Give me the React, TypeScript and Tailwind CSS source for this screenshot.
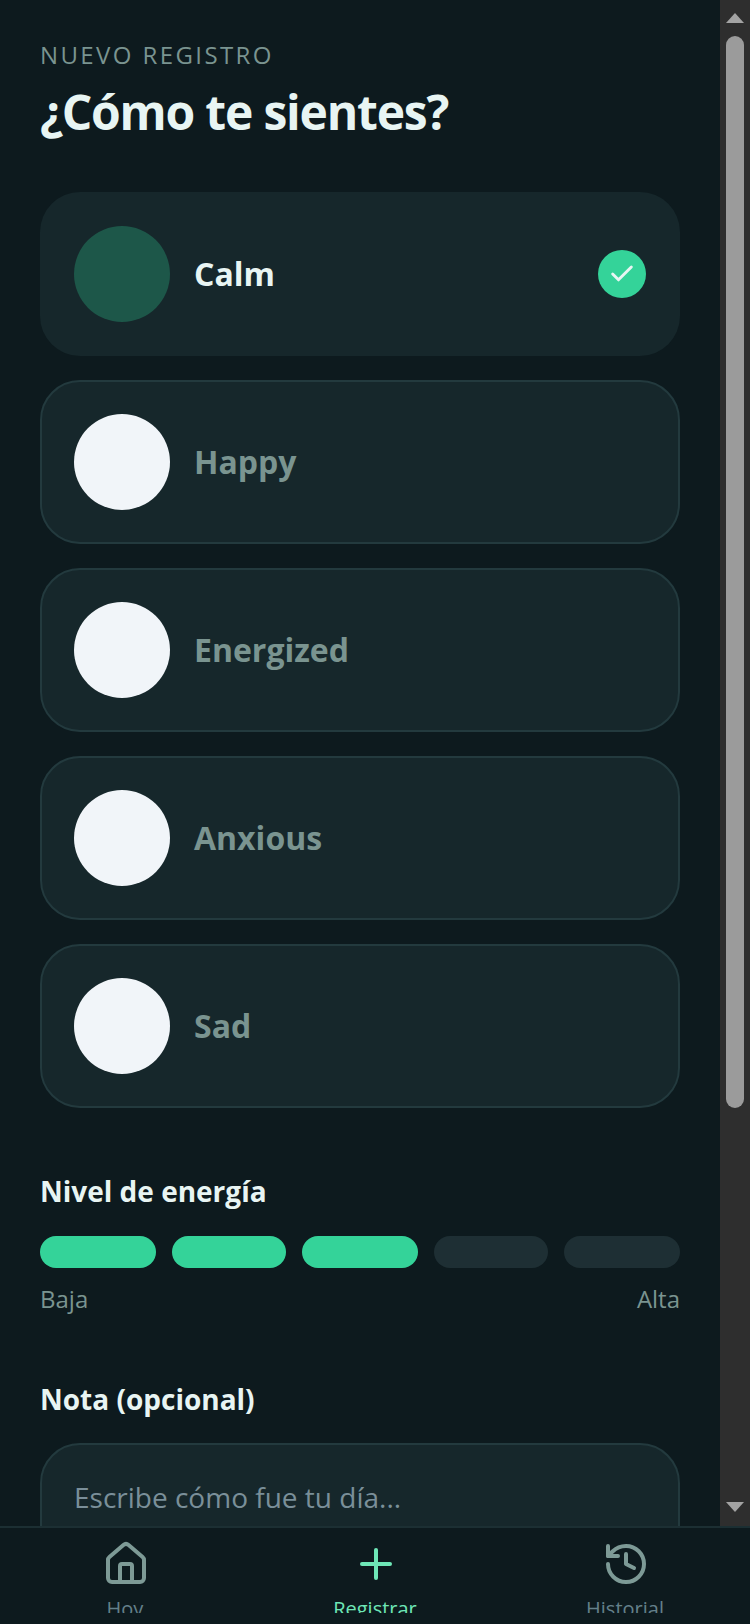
import { Check, History, House, Plus } from "lucide-react";

const moods = ["Calm", "Happy", "Energized", "Anxious", "Sad"];
const levels = [
  { on: true, width: "w-[116px]" },
  { on: true, width: "w-[114px]" },
  { on: true, width: "w-[116px]" },
  { on: false, width: "w-[114px]" },
  { on: false, width: "w-[116px]" },
];

function MoodCard({ name, selected }: { name: string; selected: boolean }) {
  return (
    <div
      className={`flex items-center gap-6 h-[164px] px-[32px] rounded-[40px] border-2 bg-[#16272b] ${
        selected ? "border-transparent" : "border-[#233a3e]"
      }`}
    >
      <div className={`w-24 h-24 rounded-full shrink-0 ${selected ? "bg-[#1d5749]" : "bg-[#f1f5f9]"}`} />
      <span className={`flex-1 text-[32px] font-bold ${selected ? "text-[#e8f5f3]" : "text-[#7a9490]"}`}>{name}</span>
      {selected && (
        <div className="w-12 h-12 rounded-full bg-[#34d399] flex items-center justify-center">
          <Check size={28} strokeWidth={2.5} className="text-[#e8f5f3]" />
        </div>
      )}
    </div>
  );
}

function Scrollbar() {
  return (
    <div className="w-[30px] shrink-0 bg-[#2e2e2e] flex flex-col items-center">
      <svg width="18" height="10" viewBox="0 0 18 10" className="mt-[13px] shrink-0">
        <polygon points="9,0 18,10 0,10" fill="#a3a3a3" />
      </svg>
      <div className="w-[18px] h-[1072px] mt-[13px] rounded-[9px] bg-[#9b9b9b] shrink-0" />
      <svg width="18" height="10" viewBox="0 0 18 10" className="mt-auto mb-[14px] shrink-0">
        <polygon points="0,0 18,0 9,10" fill="#a3a3a3" />
      </svg>
    </div>
  );
}

function TabItem({ label, active, children }: { label: string; active?: boolean; children: React.ReactNode }) {
  return (
    <div className={`flex-1 flex flex-col items-center ${active ? "text-[#6ee7b7]" : "text-[#7d9a96]"}`}>
      <div className="shrink-0 translate-x-px">{children}</div>
      <span className={`shrink-0 text-[20px] leading-[28px] mt-[7px] ${active ? "text-[#6ee7b7]" : "text-[#64808a]"}`}>{label}</span>
    </div>
  );
}

export default function App() {
  return (
    <div className="w-[750px] h-[1624px] flex flex-col overflow-hidden bg-[#0d1a1e] font-['Open_Sans',sans-serif]">
      <div className="flex-1 flex min-h-0 overflow-hidden">
        <div className="flex-1 min-w-0 px-10 pt-[39px]">
          <p className="text-[24px] leading-[32px] tracking-[2.4px] text-[#7a9490]">NUEVO REGISTRO</p>
          <h1 className="mt-[9px] text-[48px] leading-[64px] font-bold tracking-[-1.2px] text-[#e8f5f3]">¿Cómo te sientes?</h1>

          <div className="mt-12 flex flex-col gap-6">
            {moods.map((m, i) => (
              <MoodCard key={m} name={m} selected={i === 0} />
            ))}
          </div>

          <h2 className="mt-[63px] text-[28px] leading-[40px] font-bold text-[#e8f5f3]">Nivel de energía</h2>
          <div className="mt-[25px] flex justify-between">
            {levels.map((level, i) => (
              <div key={i} className={`${level.width} h-8 rounded-full ${level.on ? "bg-[#34d399]" : "bg-[#1e2f34]"}`} />
            ))}
          </div>
          <div className="mt-[11px] flex justify-between text-[24px] leading-[40px] text-[#7a9490]">
            <span>Baja</span>
            <span>Alta</span>
          </div>

          <h2 className="mt-[60px] text-[28px] leading-[40px] font-bold text-[#e8f5f3]">Nota (opcional)</h2>
          <div className="mt-6 h-[200px] px-[32px] pt-8 rounded-[40px] border-2 border-[#233a3e] bg-[#16272b]">
            <p className="text-[28px] leading-[40px] text-[#7a8f99]">Escribe cómo fue tu día...</p>
          </div>
        </div>
        <Scrollbar />
      </div>
      <div className="h-[98px] shrink-0 border-t-2 border-[#1c2f33] bg-[#0d1a1e] overflow-hidden">
        <div className="h-[85px] flex pt-3 overflow-hidden">
          <TabItem label="Hoy">
            <House size={48} strokeWidth={2} />
          </TabItem>
          <TabItem label="Registrar" active>
            <Plus size={48} strokeWidth={2} />
          </TabItem>
          <TabItem label="Historial">
            <History size={48} strokeWidth={2} />
          </TabItem>
        </div>
      </div>
    </div>
  );
}
